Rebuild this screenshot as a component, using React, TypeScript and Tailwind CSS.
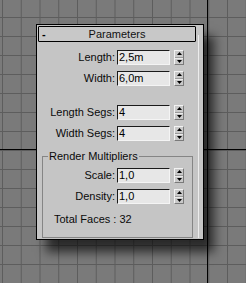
import React from 'react';

const font = { fontFamily: '"Liberation Sans", Arial, sans-serif' };

const Spinner: React.FC = () => (
  <div className="flex flex-col w-[10px] h-[15px] bg-[#c9c9c9] border-t border-l border-[#f2f2f2] border-b border-r border-b-[#7a7a7a] border-r-[#7a7a7a]">
    <div className="flex-1 flex items-center justify-center border-b border-[#9a9a9a]">
      <svg width="5" height="3" viewBox="0 0 5 3">
        <path d="M2.5 0 L5 3 L0 3 Z" fill="#000" />
      </svg>
    </div>
    <div className="flex-1 flex items-center justify-center border-t border-[#ececec]">
      <svg width="5" height="3" viewBox="0 0 5 3">
        <path d="M0 0 L5 0 L2.5 3 Z" fill="#000" />
      </svg>
    </div>
  </div>
);

interface RowProps {
  label: string;
  value: string;
  labelWidth: string;
  className?: string;
}

const Row: React.FC<RowProps> = ({ label, value, labelWidth, className = '' }) => (
  <div className={`flex items-center h-[15px] ${className}`}>
    <span className={`${labelWidth} text-right text-[11px] leading-[13px] text-[#0a0a0a] whitespace-nowrap`}>{label}</span>
    <div className="ml-[2px] w-[53px] h-[15px] flex items-center pl-[1px] bg-[#e7e7e7] border-t border-l border-[#1a1a1a] border-b border-r border-b-[#f4f4f4] border-r-[#f4f4f4] text-[11px] leading-[13px] text-black">
      {value}
    </div>
    <div className="ml-[4px]">
      <Spinner />
    </div>
  </div>
);

export default function App() {
  return (
    <div
      style={font}
      className="relative w-[246px] h-[283px] overflow-hidden bg-[#7a7a7a] bg-[linear-gradient(to_right,#5d5d5d_1px,transparent_1px),linear-gradient(to_bottom,#5d5d5d_1px,transparent_1px)] bg-[size:18.75px_19px] bg-[position:2px_17px]"
    >
      {/* viewport axis lines */}
      <div className="absolute left-[207px] top-0 w-px h-full bg-black" />
      <div className="absolute left-0 top-[149px] w-full h-px bg-black" />

      <div className="absolute left-[36px] top-[24px] w-[168px] h-[216px] flex border border-black bg-[#c5c5c5] shadow-[10px_12px_10px_rgba(0,0,0,0.65)]">
        <div className="w-[160px] flex flex-col">
          <div className="mt-px ml-px w-[158px] h-[16px] flex items-center border border-black rounded-[1px] bg-[#c8c8c8] px-[3px]">
            <span className="w-[8px] text-[11px] leading-[13px] font-bold text-black">-</span>
            <span className="flex-1 text-center text-[11px] leading-[13px] text-[#111] pr-[8px]">Parameters</span>
          </div>

          <Row label="Length:" value="2,5m" labelWidth="w-[78px]" className="mt-[8px]" />
          <Row label="Width:" value="6,0m" labelWidth="w-[78px]" className="mt-[6px]" />
          <Row label="Length Segs:" value="4" labelWidth="w-[78px]" className="mt-[19px]" />
          <Row label="Width Segs:" value="4" labelWidth="w-[78px]" className="mt-[6px]" />

          <fieldset className="mt-[9px] ml-[5px] w-[151px] border border-[#858585] pl-[5px] pb-[11px]">
            <legend className="px-[1px] text-[11px] leading-[13px] text-[#0a0a0a]">Render Multipliers</legend>
            <Row label="Scale:" value="1,0" labelWidth="w-[67px]" className="mt-[5px]" />
            <Row label="Density:" value="1,0" labelWidth="w-[67px]" className="mt-[6px]" />
            <div className="mt-[9px] ml-[6px] text-[11px] leading-[13px] text-[#0a0a0a]">Total Faces : 32</div>
          </fieldset>
        </div>
        <div className="w-[6px] flex">
          <div className="ml-px mt-[10px] mb-px w-px bg-[#ececec]" />
        </div>
      </div>
    </div>
  );
}
